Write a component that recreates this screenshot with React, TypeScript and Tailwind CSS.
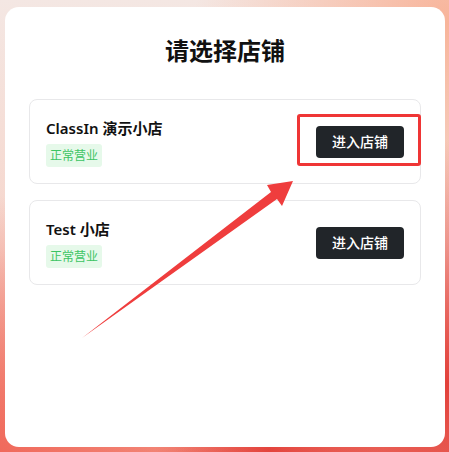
import React from 'react'

interface Store {
  name: string
  status: string
}

const stores: Store[] = [
  { name: 'ClassIn 演示小店', status: '正常营业' },
  { name: 'Test 小店', status: '正常营业' },
]

function StoreCard({ store }: { store: Store }) {
  return (
    <div className="flex items-center justify-between rounded-lg border border-[#e8e8ea] bg-white px-4 py-4">
      <div className="flex flex-col gap-1">
        <div className="text-[15px] font-semibold leading-6 text-[#111]">{store.name}</div>
        <span className="w-fit rounded-[3px] bg-[#e6f9ea] px-1 text-[12px] leading-[23px] text-[#3cc463]">
          {store.status}
        </span>
      </div>
      <button className="h-8 rounded-[4px] bg-[#212529] px-4 text-[14px] font-medium text-white">
        进入店铺
      </button>
    </div>
  )
}

export default function App() {
  return (
    <div
      className="relative flex h-[452px] w-full flex-col overflow-hidden bg-[radial-gradient(ellipse_at_100%_85%,#e2403a_0%,transparent_45%),radial-gradient(ellipse_at_60%_100%,#e4463e_0%,transparent_30%),radial-gradient(ellipse_at_0%_100%,#f06a5c_0%,transparent_40%),radial-gradient(ellipse_at_100%_5%,#f8b49a_0%,transparent_40%),linear-gradient(180deg,#f4e7e3_0%,#f6d5cb_55%,#f39282_100%)] pb-[5px] pl-[5px] pr-[4px] pt-[7px]"
      style={{ fontFamily: '"Noto Sans", "Noto Sans CJK SC", sans-serif' }}
    >
      <div className="flex flex-1 flex-col rounded-[14px] bg-white px-6 pt-[27px]">
        <h1 className="mb-8 text-center text-[24px] font-bold leading-[33px] text-[#111]">请选择店铺</h1>
        <div className="flex flex-col gap-4">
          {stores.map((s) => (
            <StoreCard key={s.name} store={s} />
          ))}
        </div>
      </div>

      {/* annotation: highlight box */}
      <div className="pointer-events-none absolute left-[297px] top-[114px] h-[52px] w-[124px] rounded-[3px] border-[3px] border-[#ef3535]" />

      {/* annotation: arrow */}
      <svg className="pointer-events-none absolute left-0 top-0" width="449" height="452" viewBox="0 0 449 452">
        <polygon points="82,338 277,199 282,206 293,181 267,185 271,192" fill="#ef3d3d" />
      </svg>
    </div>
  )
}
